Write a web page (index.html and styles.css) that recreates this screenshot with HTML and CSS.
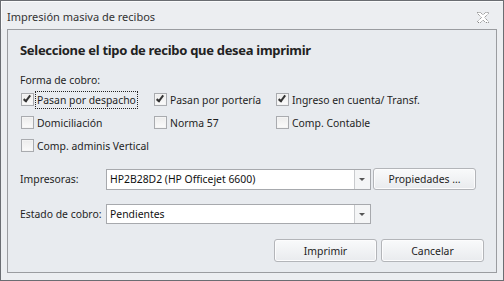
FILE: index.html
```html
<html>
    <head>
        <title>Impresión masiva de recibos</title>
        <link rel="stylesheet" href="styles.css">
    </head>
    <body>
        <div class="window">
            <div class="titlebar">
                <span class="title">Impresión masiva de recibos</span>
                <svg class="close" width="12" height="11" viewBox="0 0 12 11">
                    <path d="M0.5 0.5 H3.5 L6 3 L8.5 0.5 H11.5 V1.5 L7.5 5.5 L11.5 9.5 V10.5 H8.5 L6 8 L3.5 10.5 H0.5 V9.5 L4.5 5.5 L0.5 1.5 Z" fill="#fff" stroke="#7a7a7a" stroke-width="1" stroke-dasharray="1 1"/>
                </svg>
            </div>
            <div class="panel">
                <div class="heading">Seleccione el tipo de recibo que desea imprimir</div>
                <div class="group-label">Forma de cobro:</div>
                <div class="checks">
                    <label class="check"><span class="box checked"></span><span class="text focus">Pasan por despacho</span></label>
                    <label class="check"><span class="box checked"></span><span class="text">Pasan por portería</span></label>
                    <label class="check"><span class="box checked"></span><span class="text">Ingreso en cuenta/ Transf.</span></label>
                    <label class="check"><span class="box"></span><span class="text">Domiciliación</span></label>
                    <label class="check"><span class="box"></span><span class="text">Norma 57</span></label>
                    <label class="check"><span class="box"></span><span class="text">Comp. Contable</span></label>
                    <label class="check wide"><span class="box"></span><span class="text">Comp. adminis Vertical</span></label>
                </div>
                <div class="field printer-row">
                    <span class="field-label">Impresoras:</span>
                    <div class="combo">
                        <span class="combo-text">HP2B28D2 (HP Officejet 6600)</span>
                        <span class="combo-arrow"></span>
                    </div>
                    <div class="button props">Propiedades ...</div>
                </div>
                <div class="field state-row">
                    <span class="field-label">Estado de cobro:</span>
                    <div class="combo short">
                        <span class="combo-text">Pendientes</span>
                        <span class="combo-arrow"></span>
                    </div>
                </div>
                <div class="actions">
                    <div class="button">Imprimir</div>
                    <div class="button">Cancelar</div>
                </div>
            </div>
        </div>
    </body>
</html>
```

FILE: styles.css
```css
body
{
    margin: 0;
    font-family: "Noto Sans", "Open Sans", sans-serif;
    font-size: 10.4px;
    color: #1e1e1e;
}

.window
{
    width: 504px;
    height: 281px;
    box-sizing: border-box;
    border: 1px solid #6a6d72;
    background: #eceef1;
    display: flex;
    flex-direction: column;
}

.titlebar
{
    height: 28px;
    display: flex;
    align-items: center;
    padding: 0 14px 0 6px;
    box-shadow: inset 1px 1px 0 #fafbfc;
}

.title
{
    flex: 1;
    color: #333;
    font-size: 11px;
    margin-top: 2px;
}

.close
{
    margin-top: 5px;
}

.panel
{
    flex: 1;
    margin: 0 6px 7px 6px;
    border: 1px solid #9a9ca0;
    background: #e8ebef;
    padding: 0 12px;
    display: flex;
    flex-direction: column;
}

.heading
{
    font-weight: bold;
    font-size: 13px;
    letter-spacing: -0.3px;
    color: #222;
    margin-top: 11px;
    height: 19px;
    line-height: 19px;
    white-space: nowrap;
}

.group-label
{
    margin-top: 12px;
    height: 16px;
    line-height: 16px;
}

.checks
{
    display: grid;
    grid-template-columns: 133px 122px auto;
    grid-auto-rows: 23px;
    margin-left: 1px;
}

.check
{
    display: flex;
    align-items: center;
    white-space: nowrap;
}

.check.wide
{
    grid-column: 1 / span 3;
}

.box
{
    width: 11px;
    height: 11px;
    border: 1px solid #a9abaf;
    background: linear-gradient(#ececec, #fbfbfb);
    box-shadow: inset 0 0 0 1px #f4f4f4;
    position: relative;
    margin-right: 2px;
}

.box.checked::after
{
    content: "";
    position: absolute;
    left: 3px;
    top: 0px;
    width: 2px;
    height: 6px;
    border: solid #333;
    border-width: 0 2px 2px 0;
    transform: rotate(38deg);
}

.text
{
    padding: 0 1px;
    line-height: 16px;
}

.text.focus
{
    outline: 1px dotted #222;
}

.field
{
    display: flex;
    align-items: center;
    white-space: nowrap;
}

.field-label
{
    width: 86px;
}

.printer-row
{
    margin-top: 11px;
    height: 22px;
}

.state-row
{
    margin-top: 14px;
    height: 20px;
}

.combo
{
    width: 263px;
    height: 19px;
    border: 1px solid #a7a9ad;
    background: #fff;
    display: flex;
    align-items: center;
}

.combo.short
{
    height: 18px;
}

.combo-text
{
    flex: 1;
    padding-left: 3px;
    color: #111;
}

.combo-arrow
{
    width: 15px;
    height: 100%;
    border-left: 1px solid #c9cbce;
    background: #f4f5f6;
    position: relative;
}

.combo-arrow::after
{
    content: "";
    position: absolute;
    left: 4px;
    top: 8px;
    border: 3px solid transparent;
    border-top: 3px solid #555;
    border-bottom: 0;
}

.button
{
    width: 101px;
    height: 20px;
    border: 1px solid #b3b5b9;
    border-radius: 3px;
    background: linear-gradient(#f9fafb, #e9ebee);
    box-shadow: inset 0 0 0 1px #fcfcfd;
    display: flex;
    align-items: center;
    justify-content: center;
    color: #222;
}

.props
{
    margin-left: 2px;
}

.actions
{
    display: flex;
    justify-content: flex-end;
    gap: 4px;
    margin-top: 15px;
}

.actions .button
{
    height: 21px;
}
```
